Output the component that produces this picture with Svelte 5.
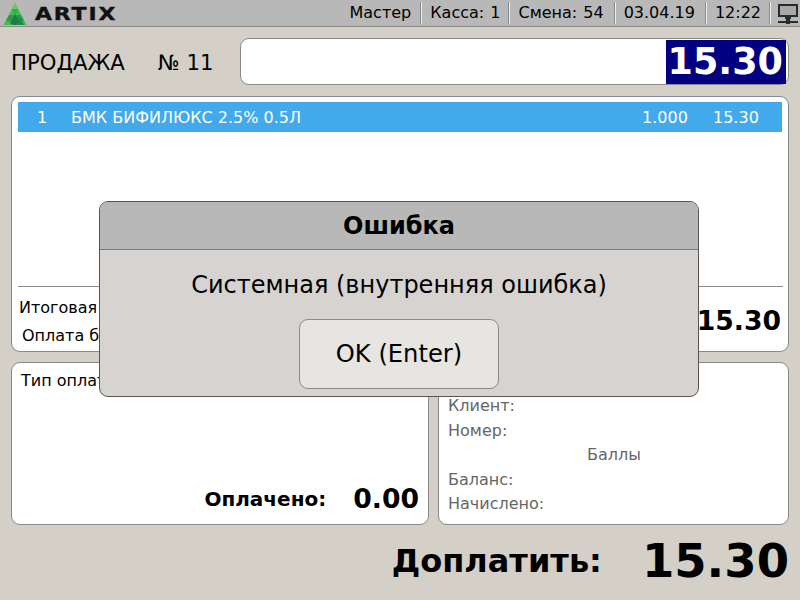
<script>
	let row = { n: 1, name: 'БМК БИФИЛЮКС 2.5% 0.5Л', qty: '1.000', price: '15.30' };
</script>

<div class="screen">
	<header class="topbar">
		<div class="logo">
			<svg width="24" height="24" viewBox="0 0 24 24">
				<polygon points="12,2 23.500,24 0.500,24" fill="#3fbb4c" />
				<polygon points="12,2 15,8 9,8" fill="#5fd05c" />
				<polygon points="9,8 15,8 12,14" fill="#34ab4a" />
				<polygon points="6,14 18,14 21,20 3,20" fill="#2a9c4a" />
				<polygon points="12,13 17,22 14,24 10,24 7,22" fill="#1a8046" />
				<polygon points="17,16 21,24 15,24" fill="#1f8c48" />
			</svg>
			<span class="brand">ARTIX</span>
		</div>
		<div class="status">
			<span class="cell master">Мастер</span>
			<span class="cell till">Касса: 1</span>
			<span class="cell">Смена: 54</span>
			<span class="cell">03.04.19</span>
			<span class="cell time">12:22</span>
			<span class="cell net">
				<svg width="20" height="24" viewBox="0 0 20 24">
					<rect x="1" y="4" width="18" height="11" fill="#a8a8a8" stroke="#2a2a2a" stroke-width="2" />
					<rect x="7" y="16" width="6" height="2" fill="#2a2a2a" />
					<rect x="0" y="20" width="20" height="2" fill="#2a2a2a" />
					<rect x="8" y="18" width="4" height="5" fill="#2a2a2a" />
				</svg>
			</span>
		</div>
	</header>

	<section class="sale">
		<div class="sale-title">
			<span>ПРОДАЖА</span>
			<span>№ 11</span>
		</div>
		<div class="entry"><span class="entry-value">15.30</span></div>
	</section>

	<section class="panel receipt">
		<div class="row">
			<span class="row-n">{row.n}</span>
			<span class="row-name">{row.name}</span>
			<span class="row-qty">{row.qty}</span>
			<span class="row-price">{row.price}</span>
		</div>
		<div class="receipt-foot">
			<div class="foot-labels">
				<span>Итоговая</span>
				<span class="foot-pay">Оплата б</span>
			</div>
			<b class="foot-sum">15.30</b>
		</div>
	</section>

	<div class="panels">
		<section class="panel pay">
			<div class="pay-type">Тип оплаты</div>
			<div class="paid">
				<b class="paid-label">Оплачено:</b>
				<b class="paid-sum">0.00</b>
			</div>
		</section>
		<section class="panel client">
			<div>Клиент:</div>
			<div>Номер:</div>
			<div class="points">Баллы</div>
			<div>Баланс:</div>
			<div>Начислено:</div>
		</section>
	</div>

	<footer class="due">
		<b class="due-label">Доплатить:</b>
		<b class="due-sum">15.30</b>
	</footer>

	<div class="dialog">
		<div class="dialog-title">Ошибка</div>
		<div class="dialog-body">
			<p>Системная (внутренняя ошибка)</p>
			<button>OK (Enter)</button>
		</div>
	</div>
</div>

<style>
	:global(body) {
		margin: 0;
		background: #d4d0c8;
	}

	.screen {
		position: relative;
		width: 800px;
		height: 600px;
		overflow: hidden;
		background: #d4d0c8;
		font-family: 'DejaVu Sans', sans-serif;
		color: #000;
		display: flex;
		flex-direction: column;
	}

	.topbar {
		height: 26px;
		flex-shrink: 0;
		background: #b8b8b8;
		border-bottom: 1px solid #8a8a8a;
		display: flex;
		justify-content: space-between;
		align-items: center;
	}

	.logo {
		display: flex;
		align-items: center;
		gap: 8px;
		padding-left: 3px;
	}

	.brand {
		font-size: 18px;
		font-weight: 700;
		letter-spacing: 1.5px;
		color: #111;
		transform: scaleX(1.22);
		transform-origin: left center;
		-webkit-text-stroke: 0.4px #111;
	}

	.status {
		display: flex;
		align-items: center;
		height: 100%;
		font-size: 16px;
		word-spacing: 1px;
	}

	.cell {
		height: 22px;
		line-height: 22px;
		padding: 0 10px 0 9px;
		border-left: 1px solid #8a8a8a;
		box-shadow: inset 1px 0 0 #f0f0f0;
		white-space: nowrap;
	}

	.cell:first-child {
		border-left: none;
		box-shadow: none;
	}

	.master {
		padding-right: 9px;
	}

	.till {
		padding-right: 8px;
	}

	.time {
		padding-right: 8px;
	}

	.net {
		padding: 0 2px 0 8px;
		display: flex;
		align-items: center;
	}

	.sale {
		display: flex;
		align-items: center;
		height: 47px;
		margin-top: 11px;
		padding: 0 11px 0 11px;
	}

	.sale-title {
		width: 229px;
		flex-shrink: 0;
		display: flex;
		gap: 33px;
		font-size: 21.2px;
		margin-top: 2px;
	}

	.entry {
		flex: 1;
		height: 47px;
		box-sizing: border-box;
		background: #fff;
		border: 1px solid #8a8a8a;
		border-radius: 9px;
		display: flex;
		justify-content: flex-end;
		align-items: center;
		padding-right: 2px;
	}

	.entry-value {
		background: #000080;
		color: #fff;
		font-size: 36.5px;
		font-weight: 700;
		line-height: 44px;
		padding: 0 3px 0 2px;
	}

	.panel {
		background: #fff;
		border: 1px solid #8a8a8a;
		border-radius: 9px;
		box-sizing: border-box;
	}

	.receipt {
		margin: 11px 11px 0;
		height: 256px;
		padding: 5px 6px 0;
		display: flex;
		flex-direction: column;
		justify-content: space-between;
	}

	.row {
		height: 30px;
		background: #42a9ea;
		color: #fff;
		display: flex;
		align-items: center;
		font-size: 16px;
	}

	.row-n {
		width: 53px;
		padding-left: 19px;
		box-sizing: border-box;
		flex-shrink: 0;
	}

	.row-name {
		flex: 1;
	}

	.row-qty {
		width: 71px;
	}

	.row-price {
		width: 69px;
	}

	.receipt-foot {
		height: 65px;
		box-sizing: border-box;
		margin-right: -1px;
		border-top: 1px solid #8a8a8a;
		display: flex;
		justify-content: space-between;
		align-items: center;
		font-size: 16px;
	}

	.foot-labels {
		display: flex;
		flex-direction: column;
		gap: 9px;
		padding: 4px 0 0 1px;
	}

	.foot-pay {
		padding-left: 3px;
	}

	.foot-sum {
		font-size: 26.67px;
		margin: 2px 2px 0 0;
	}

	.panels {
		display: flex;
		gap: 9px;
		margin: 10px 11px 0;
		height: 163px;
	}

	.pay {
		width: 418px;
		padding: 8px 9px 10px;
		font-size: 16px;
		display: flex;
		flex-direction: column;
		justify-content: space-between;
	}

	.paid {
		display: flex;
		justify-content: flex-end;
		align-items: center;
		gap: 27px;
	}

	.paid-label {
		font-size: 20px;
	}

	.paid-sum {
		font-size: 26.67px;
	}

	.client {
		flex: 1;
		padding: 31px 9px 0;
		font-size: 16px;
		line-height: 24.6px;
		color: #666;
	}

	.points {
		padding-left: 139px;
	}

	.due {
		flex: 1;
		display: flex;
		justify-content: flex-end;
		align-items: center;
		gap: 40px;
		padding: 0 11px 3px 0;
	}

	.due-label {
		font-size: 32px;
	}

	.due-sum {
		font-size: 46.5px;
	}

	.dialog {
		position: absolute;
		left: 99px;
		top: 201px;
		width: 600px;
		height: 196px;
		box-sizing: border-box;
		background: #d6d3d0;
		border: 1px solid #555;
		border-radius: 9px;
		overflow: hidden;
	}

	.dialog-title {
		height: 47px;
		line-height: 49px;
		background: #b8b8b8;
		border-bottom: 1px solid #7a7a7a;
		text-align: center;
		font-size: 24px;
		font-weight: 700;
	}

	.dialog-body {
		display: flex;
		flex-direction: column;
		align-items: center;
	}

	.dialog-body p {
		margin: 20px 0 0;
		font-size: 24px;
		line-height: 30px;
	}

	.dialog-body button {
		margin-top: 19px;
		width: 200px;
		height: 70px;
		padding-bottom: 2px;
		background: #e6e5e2;
		border: 1px solid #8a8a8a;
		border-radius: 9px;
		font-family: inherit;
		font-size: 24.2px;
		color: #000;
	}
</style>
